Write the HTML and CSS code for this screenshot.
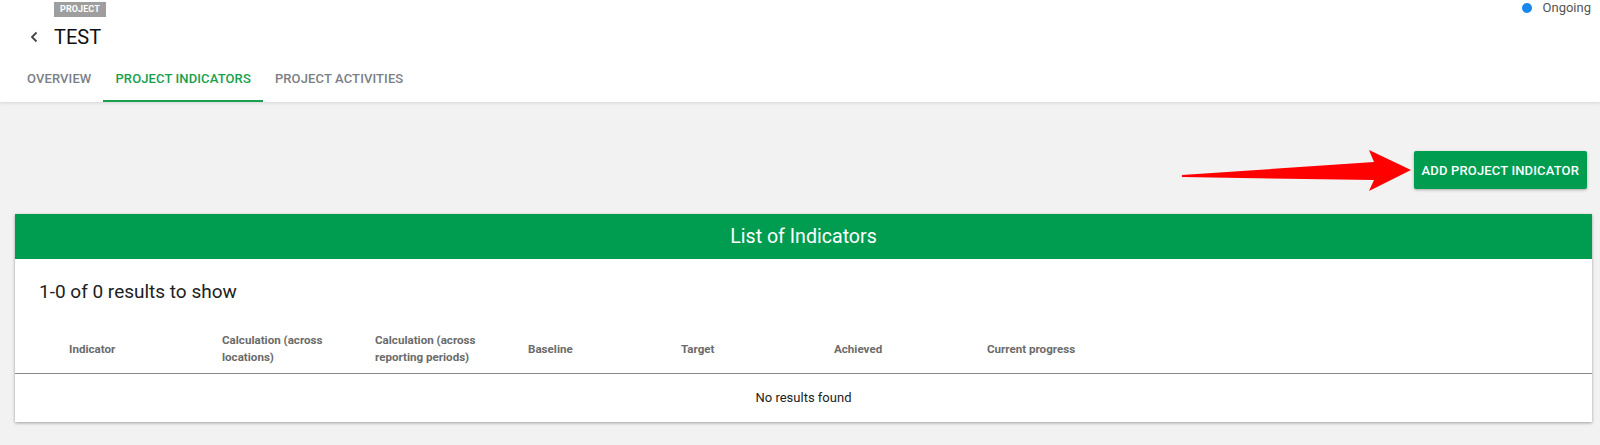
FILE: index.html
```html
<!DOCTYPE html>
<html lang="en">
<head>
<meta charset="utf-8">
<title>TEST - Project Indicators</title>
<link rel="stylesheet" href="styles.css">
</head>
<body>
<header class="page-header">
  <div class="status"><span class="status-dot"></span><span class="status-text">Ongoing</span></div>
  <span class="badge">PROJECT</span>
  <div class="title-row">
    <svg class="back" width="10" height="12" viewBox="0 0 10 12"><path d="M7.5 1.5 L3 6 L7.5 10.5" fill="none" stroke="#444" stroke-width="1.8"/></svg>
    <h1 class="title">TEST</h1>
  </div>
  <nav class="tabs">
    <a class="tab">OVERVIEW</a>
    <a class="tab active">PROJECT INDICATORS</a>
    <a class="tab">PROJECT ACTIVITIES</a>
  </nav>
</header>
<main class="main">
  <div class="actions">
    <button class="btn">ADD PROJECT INDICATOR</button>
  </div>
  <section class="card">
    <div class="card-head">List of Indicators</div>
    <div class="count">1-0 of 0 results to show</div>
    <div class="thead">
      <div class="th">Indicator</div>
      <div class="th">Calculation (across locations)</div>
      <div class="th">Calculation (across reporting periods)</div>
      <div class="th">Baseline</div>
      <div class="th">Target</div>
      <div class="th">Achieved</div>
      <div class="th">Current progress</div>
    </div>
    <div class="empty">No results found</div>
  </section>
</main>
<svg class="annot-arrow" width="1600" height="445" viewBox="0 0 1600 445">
  <polygon points="1182,175 1374,162 1369,150 1411,170 1369,191 1374,180 1182,177" fill="#ff0000"/>
</svg>
</body>
</html>
```
FILE: styles.css
```css
* { box-sizing: border-box; }
html, body { margin: 0; padding: 0; }
body {
  position: relative;
  width: 1600px;
  height: 445px;
  overflow: hidden;
  background: #f2f2f2;
  font-family: Roboto, "Liberation Sans", Arial, sans-serif;
  color: #212121;
}
.page-header {
  position: relative;
  background: #fff;
  height: 102px;
  padding-top: 2px;
  box-shadow: 0 1px 3px rgba(0,0,0,0.12);
  z-index: 1;
}
.status {
  position: absolute;
  top: 1px;
  right: 9px;
  display: flex;
  align-items: center;
  height: 13px;
  gap: 11px;
}
.status-dot {
  width: 10px;
  height: 10px;
  border-radius: 50%;
  background: #1589ee;
}
.status-text {
  font-size: 13px;
  color: #555;
  line-height: 13px;
}
.badge {
  display: block;
  width: fit-content;
  margin-left: 54px;
  height: 15px;
  padding: 0 6px;
  background: #9e9e9e;
  color: #fff;
  font-size: 9px;
  font-weight: 700;
  line-height: 15px;
  letter-spacing: 0.1px;
}
.title-row {
  display: flex;
  align-items: center;
  height: 24px;
  margin-top: 8px;
}
.back {
  margin-left: 29px;
  margin-right: 15px;
}
.title {
  margin: 0;
  font-size: 20px;
  font-weight: 400;
  line-height: 24px;
  color: #111;
}
.tabs {
  display: flex;
  margin-top: 9px;
  padding-left: 15px;
}
.tab {
  display: block;
  height: 44px;
  line-height: 42px;
  padding: 0 12px;
  font-size: 13px;
  font-weight: 500;
  letter-spacing: 0.12px;
  color: #7b8085;
  border-bottom: 2px solid transparent;
}
.tab.active {
  color: #17a04e;
  border-bottom-color: #17a04e;
}
.main {
  padding: 49px 8px 0 15px;
}
.actions {
  display: flex;
  justify-content: flex-end;
  padding-right: 5px;
}
.btn {
  height: 38px;
  padding: 0 8px;
  border: none;
  border-radius: 2px;
  background: #009d50;
  color: #fff;
  font-family: Roboto, "Liberation Sans", Arial, sans-serif;
  font-size: 13px;
  font-weight: 500;
  letter-spacing: 0.15px;
  box-shadow: 0 1px 3px rgba(0,0,0,0.3);
}
.card {
  margin-top: 25px;
  background: #fff;
  box-shadow: 0 1px 3px rgba(0,0,0,0.35);
}
.card-head {
  height: 45px;
  line-height: 45px;
  background: #009d50;
  color: #fff;
  font-size: 19.6px;
  text-align: center;
}
.count {
  padding: 21px 24px 0;
  font-size: 19px;
  line-height: 24px;
  height: 66px;
  color: #212121;
}
.thead {
  display: grid;
  grid-template-columns: repeat(7, 153px);
  align-items: center;
  padding-left: 54px;
  height: 49px;
  border-bottom: 1px solid #8a8a8a;
}
.th {
  padding-right: 24px;
  font-size: 11.6px;
  font-weight: 700;
  line-height: 17px;
  color: #6b6b6b;
}
.empty {
  height: 48px;
  line-height: 47px;
  text-align: center;
  font-size: 13px;
  color: #222;
}
.annot-arrow {
  position: absolute;
  left: 0;
  top: 0;
  pointer-events: none;
  z-index: 5;
}
```
